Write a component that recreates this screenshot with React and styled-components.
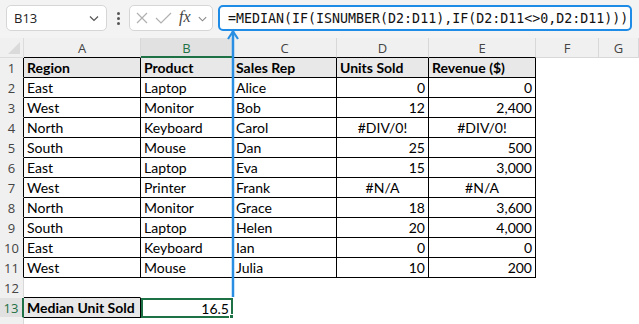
import React from "react";
import styled, { createGlobalStyle } from "styled-components";

const Global = createGlobalStyle`
  html, body { margin: 0; padding: 0; background: #ffffff; }
  body { width: 639px; height: 324px; overflow: hidden; font-family: "Lato", "Liberation Sans", sans-serif; }
`;

const Page = styled.div`
  position: relative;
  width: 639px;
  height: 324px;
  overflow: hidden;
  background: #fff;
`;

const Toolbar = styled.div`
  height: 38px;
  box-sizing: border-box;
  background: #f3f3f3;
  display: flex;
  align-items: flex-start;
  padding: 5px 0 0 6px;
`;

const Box = styled.div`
  height: 26px;
  box-sizing: border-box;
  background: #fff;
  border: 1px solid #d6d6d6;
  border-radius: 5px;
  display: flex;
  align-items: center;
`;

const NameBox = styled(Box)`
  width: 101px;
  padding: 0 6px 0 7px;
  justify-content: space-between;
  font-family: "Open Sans", "Noto Sans", sans-serif;
  font-size: 13px;
  color: #222;
`;

const Dots = styled.div`
  width: 22px;
  display: flex;
  flex-direction: column;
  align-items: center;
  gap: 2px;
  padding-top: 7px;
  span {
    width: 3px;
    height: 3px;
    border-radius: 50%;
    background: #555;
  }
`;

const FxBox = styled(Box)`
  width: 84px;
  padding: 0 4px 0 5px;
  justify-content: space-between;
`;

const Fx = styled.span`
  font-family: "Liberation Serif", "DejaVu Serif", serif;
  font-style: italic;
  font-size: 16px;
  color: #444;
  margin-top: -2px;
`;

const FormulaBox = styled.div`
  margin-left: 5px;
  width: 414px;
  height: 26px;
  box-sizing: border-box;
  border: 2px solid #1e8be6;
  border-radius: 5px;
  background: #fff;
  display: flex;
  align-items: center;
  padding-left: 8px;
  font-family: "DejaVu Sans Mono", "Liberation Mono", monospace;
  font-size: 13.3px;
  color: #111;
  white-space: nowrap;
`;

const Grid = styled.div`
  display: grid;
  grid-template-columns: 24px 117px 92px 104px 92px 107px 63px 40px;
  grid-auto-rows: 20px;
`;

const Corner = styled.div`
  background: #f0f0f0;
  border-right: 1px solid #dcdcdc;
  border-bottom: 1px solid #dcdcdc;
  box-sizing: border-box;
  position: relative;
  &::after {
    content: "";
    position: absolute;
    right: 3px;
    bottom: 3px;
    width: 0;
    height: 0;
    border-left: 12px solid transparent;
    border-bottom: 12px solid #dadada;
  }
`;

const ColHead = styled.div`
  box-sizing: border-box;
  background: ${(p) => (p.$sel ? "#e1e1e1" : "#f0f0f0")};
  border-right: 1px solid #d8d8d8;
  border-bottom: ${(p) =>
    p.$sel ? "2px solid #1e7145" : p.$table ? "1px solid #000" : "1px solid #d8d8d8"};
  color: ${(p) => (p.$sel ? "#1e7145" : "#444")};
  font-family: "Open Sans", "Noto Sans", sans-serif;
  font-size: 13px;
  display: flex;
  align-items: center;
  justify-content: center;
  padding-top: ${(p) => (p.$sel ? "1px" : "0")};
`;

const RowHead = styled.div`
  box-sizing: border-box;
  background: ${(p) => (p.$sel ? "#e1e1e1" : "#f0f0f0")};
  border-right: ${(p) =>
    p.$sel ? "2px solid #1e7145" : p.$table ? "1px solid #000" : "1px solid #d8d8d8"};
  border-bottom: 1px solid #f0f0f0;
  color: ${(p) => (p.$sel ? "#1e7145" : "#444")};
  font-family: "Open Sans", "Noto Sans", sans-serif;
  font-size: 13px;
  display: flex;
  align-items: center;
  justify-content: center;
`;

const Cell = styled.div`
  box-sizing: border-box;
  position: relative;
  background: ${(p) => (p.$fill ? "#e8e8e8" : "#fff")};
  border-right: 1px solid ${(p) => (p.$border ? "#000" : "transparent")};
  border-bottom: 1px solid ${(p) => (p.$border || p.$bottom ? "#000" : "transparent")};
  font-size: 14px;
  font-weight: ${(p) => (p.$bold ? 700 : 400)};
  color: #000;
  display: flex;
  align-items: center;
  justify-content: ${(p) =>
    p.$align === "right" ? "flex-end" : p.$align === "center" ? "center" : "flex-start"};
  padding: 0 3px 0 3px;
  white-space: nowrap;
  overflow: visible;
`;

const SelCell = styled(Cell)`
  border: none;
  box-shadow: inset 0 0 0 2px #1e7145;
  padding-right: 4px;
  &::after {
    content: "";
    position: absolute;
    right: -3px;
    bottom: -3px;
    width: 5px;
    height: 5px;
    background: #1e7145;
    border: 1px solid #fff;
  }
`;

const Arrow = styled.svg`
  position: absolute;
  left: 227px;
  top: 30px;
  pointer-events: none;
`;

const Chevron = ({ color = "#555", size = 12 }) => (
  <svg width={size} height={size} viewBox="0 0 12 12">
    <path d="M2 4.5 L6 8.5 L10 4.5" fill="none" stroke={color} strokeWidth="1.2" />
  </svg>
);

const cols = ["A", "B", "C", "D", "E", "F", "G"];

const data = [
  ["East", "Laptop", "Alice", "0", "0"],
  ["West", "Monitor", "Bob", "12", "2,400"],
  ["North", "Keyboard", "Carol", "#DIV/0!", "#DIV/0!"],
  ["South", "Mouse", "Dan", "25", "500"],
  ["East", "Laptop", "Eva", "15", "3,000"],
  ["West", "Printer", "Frank", "#N/A", "#N/A"],
  ["North", "Monitor", "Grace", "18", "3,600"],
  ["South", "Laptop", "Helen", "20", "4,000"],
  ["East", "Keyboard", "Ian", "0", "0"],
  ["West", "Mouse", "Julia", "10", "200"],
];

const headers = ["Region", "Product", "Sales Rep", "Units Sold", "Revenue ($)"];

const Blank = ({ n }) =>
  Array.from({ length: n }, (_, i) => <Cell key={"b" + i} />);

export default function App() {
  const rows = [];
  rows.push(
    <React.Fragment key="r1">
      <RowHead $table>1</RowHead>
      {headers.map((h, i) => (
        <Cell key={i} $border $bold $fill>
          {h}
        </Cell>
      ))}
      <Blank n={2} />
    </React.Fragment>
  );
  data.forEach((r, ri) => {
    rows.push(
      <React.Fragment key={"d" + ri}>
        <RowHead $table>{ri + 2}</RowHead>
        {r.map((v, ci) => {
          const isErr = v.startsWith("#");
          const align = ci < 3 ? "left" : isErr ? "center" : "right";
          return (
            <Cell key={ci} $border $align={align}>
              {v}
            </Cell>
          );
        })}
        <Blank n={2} />
      </React.Fragment>
    );
  });
  rows.push(
    <React.Fragment key="r12">
      <RowHead>12</RowHead>
      <Cell $bottom />
      <Blank n={6} />
    </React.Fragment>
  );
  rows.push(
    <React.Fragment key="r13">
      <RowHead $sel>13</RowHead>
      <Cell $border $bold $fill>
        Median Unit Sold
      </Cell>
      <SelCell $align="right">16.5</SelCell>
      <Blank n={5} />
    </React.Fragment>
  );
  rows.push(
    <React.Fragment key="r14">
      <RowHead />
      <Blank n={7} />
    </React.Fragment>
  );

  return (
    <Page>
      <Global />
      <Toolbar>
        <NameBox>
          <span>B13</span>
          <Chevron />
        </NameBox>
        <Dots>
          <span />
          <span />
          <span />
        </Dots>
        <FxBox>
          <svg width="14" height="14" viewBox="0 0 14 14">
            <path d="M2 2 L12 12 M12 2 L2 12" stroke="#b0b0b0" strokeWidth="1.2" fill="none" />
          </svg>
          <svg width="17" height="14" viewBox="0 0 17 14">
            <path d="M1 7 L6 12 L16 2" stroke="#b0b0b0" strokeWidth="1.2" fill="none" />
          </svg>
          <Fx>fx</Fx>
          <Chevron color="#888" size={11} />
        </FxBox>
        <FormulaBox>=MEDIAN(IF(ISNUMBER(D2:D11),IF(D2:D11&lt;&gt;0,D2:D11)))</FormulaBox>
      </Toolbar>
      <Grid>
        <Corner />
        {cols.map((c) => (
          <ColHead key={c} $sel={c === "B"} $table={"ABCDE".includes(c)}>
            {c}
          </ColHead>
        ))}
        {rows}
      </Grid>
      <Arrow width="12" height="268" viewBox="0 0 12 268">
        <line x1="6" y1="1" x2="6" y2="267" stroke="#2a8fe3" strokeWidth="2.5" />
        <path d="M1 9 L6 1.5 L11 9" stroke="#2a8fe3" strokeWidth="2.2" fill="none" />
      </Arrow>
    </Page>
  );
}
